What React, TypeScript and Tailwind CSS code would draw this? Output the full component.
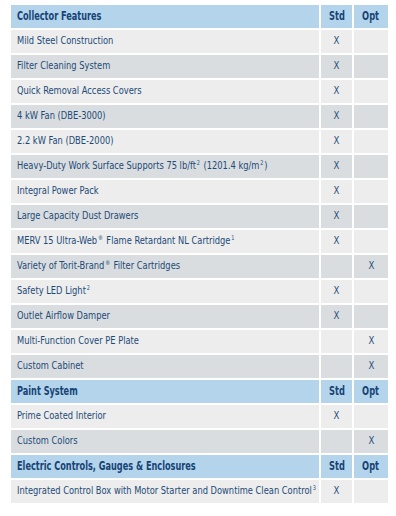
import React from 'react';

type Row = { label: React.ReactNode; std?: boolean; opt?: boolean };
type Section = { title: string; rows: Row[] };

const Sup = ({ children }: { children: React.ReactNode }) => (
  <span className="text-[6.5px] align-[4px] leading-none ml-[1px] mr-[1px]">{children}</span>
);

const sections: Section[] = [
  {
    title: 'Collector Features',
    rows: [
      { label: 'Mild Steel Construction', std: true },
      { label: 'Filter Cleaning System', std: true },
      { label: 'Quick Removal Access Covers', std: true },
      { label: '4 kW Fan (DBE-3000)', std: true },
      { label: '2.2 kW Fan (DBE-2000)', std: true },
      {
        label: (
          <>
            Heavy-Duty Work Surface Supports 75 lb/ft<Sup>2</Sup> (1201.4 kg/m<Sup>2</Sup>)
          </>
        ),
        std: true,
      },
      { label: 'Integral Power Pack', std: true },
      { label: 'Large Capacity Dust Drawers', std: true },
      {
        label: (
          <>
            MERV 15 Ultra-Web<Sup>®</Sup> Flame Retardant NL Cartridge<Sup>1</Sup>
          </>
        ),
        std: true,
      },
      {
        label: (
          <>
            Variety of Torit-Brand<Sup>®</Sup> Filter Cartridges
          </>
        ),
        opt: true,
      },
      {
        label: (
          <>
            Safety LED Light<Sup>2</Sup>
          </>
        ),
        std: true,
      },
      { label: 'Outlet Airflow Damper', std: true },
      { label: 'Multi-Function Cover PE Plate', opt: true },
      { label: 'Custom Cabinet', opt: true },
    ],
  },
  {
    title: 'Paint System',
    rows: [
      { label: 'Prime Coated Interior', std: true },
      { label: 'Custom Colors', opt: true },
    ],
  },
  {
    title: 'Electric Controls, Gauges & Enclosures',
    rows: [
      {
        label: (
          <>
            Integrated Control Box with Motor Starter and Downtime Clean Control<Sup>3</Sup>
          </>
        ),
        std: true,
      },
    ],
  },
];

const grid = 'grid grid-cols-[308px_31px_34px] gap-x-[2px] h-[23px]';

export default function App() {
  return (
    <div
      className="w-[396px] h-[516px] bg-white pt-[5px] pl-[11px] text-[#1d4a78] overflow-hidden"
      style={{ fontFamily: '"Liberation Sans Narrow", "DejaVu Sans Condensed", sans-serif' }}
    >
      <div className="flex flex-col gap-y-[2px]">
        {sections.map((s) => (
          <React.Fragment key={s.title}>
            <div className={`${grid} font-bold text-[11.5px] text-[#164375]`}>
              <div className="bg-[#b4d4ec] flex items-center px-[6px] whitespace-nowrap">
                <span className="inline-block scale-x-[0.79] origin-left">{s.title}</span>
              </div>
              <div className="bg-[#b4d4ec] flex items-center justify-center">
                <span className="inline-block scale-x-[0.8]">Std</span>
              </div>
              <div className="bg-[#b4d4ec] flex items-center justify-center">
                <span className="inline-block scale-x-[0.8]">Opt</span>
              </div>
            </div>
            {s.rows.map((r, i) => {
              const bg = i % 2 === 0 ? 'bg-[#ecedec]' : 'bg-[#d9dde0]';
              return (
                <div key={i} className={`${grid} text-[11px]`}>
                  <div className={`${bg} flex items-center px-[6px] whitespace-nowrap min-w-0`}>
                    <span className="inline-block shrink-0 scale-x-[0.84] origin-left">{r.label}</span>
                  </div>
                  <div className={`${bg} flex items-center justify-center`}>
                    <span className="inline-block scale-x-[0.86]">{r.std ? 'X' : ''}</span>
                  </div>
                  <div className={`${bg} flex items-center justify-center`}>
                    <span className="inline-block scale-x-[0.86]">{r.opt ? 'X' : ''}</span>
                  </div>
                </div>
              );
            })}
          </React.Fragment>
        ))}
      </div>
    </div>
  );
}
